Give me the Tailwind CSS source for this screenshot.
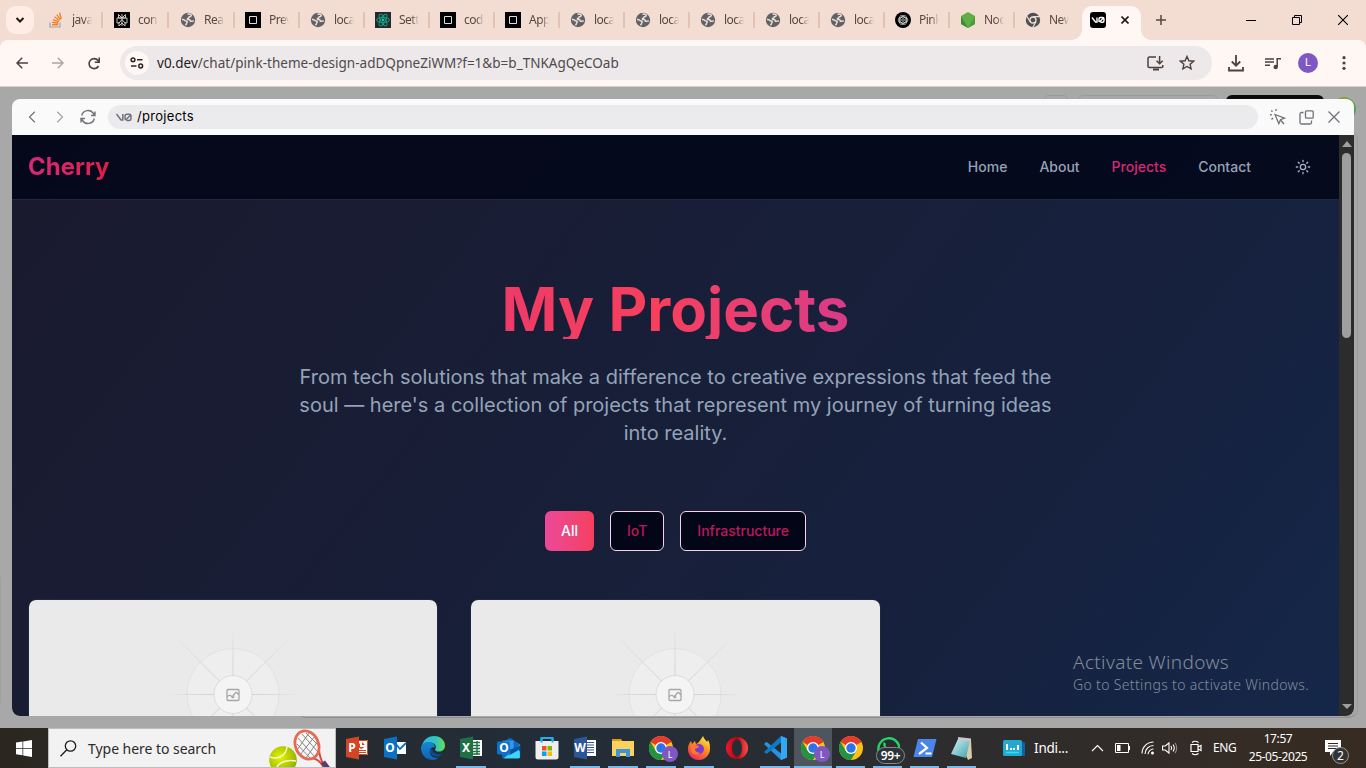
<!DOCTYPE html>
<html lang="en">
<head>
<meta charset="utf-8">
<title>v0 preview - Cherry</title>
<script src="https://cdn.jsdelivr.net/npm/@tailwindcss/browser@4"></script>
</head>
<body class="w-[1366px] h-[768px] overflow-hidden flex flex-col bg-[#a8a8a8] font-['Noto_Sans',sans-serif]">

<svg width="0" height="0" class="absolute">
  <defs>
    <linearGradient id="gEdge" x1="0" y1="0" x2="1" y2="0"><stop offset="0" stop-color="#2bb5e8"/><stop offset=".6" stop-color="#30c5c0"/><stop offset="1" stop-color="#6be04e"/></linearGradient>
    <linearGradient id="gEdge2" x1="0" y1="0" x2="0" y2="1"><stop offset="0" stop-color="#1689d0"/><stop offset="1" stop-color="#1162b6"/></linearGradient>
    <linearGradient id="gFire" x1="0.8" y1="0" x2="0.2" y2="1"><stop offset="0" stop-color="#fff04a"/><stop offset=".45" stop-color="#ff8a1c"/><stop offset="1" stop-color="#f0206a"/></linearGradient>
    <linearGradient id="gNote" x1="0" y1="0" x2="1" y2="1"><stop offset="0" stop-color="#d5f2f5"/><stop offset="1" stop-color="#3d9fae"/></linearGradient>
    <linearGradient id="gOpera" x1="0" y1="0" x2="1" y2="0"><stop offset="0" stop-color="#f0162c"/><stop offset=".5" stop-color="#b3050f"/><stop offset="1" stop-color="#ff4f4f"/></linearGradient>
    <radialGradient id="gBall" cx=".4" cy=".4" r=".7"><stop offset="0" stop-color="#e5f500"/><stop offset="1" stop-color="#8aa800"/></radialGradient>
    <radialGradient id="ray" gradientUnits="userSpaceOnUse" cx="70" cy="70" r="66"><stop offset=".3" stop-color="#d4d4d4"/><stop offset=".7" stop-color="#dcdcdc"/><stop offset="1" stop-color="#eaeaea"/></radialGradient>
    <radialGradient id="rayDiag" gradientUnits="userSpaceOnUse" cx="70" cy="70" r="90"><stop offset=".2" stop-color="#d2d2d2"/><stop offset=".6" stop-color="#dbdbdb"/><stop offset="1" stop-color="#eaeaea"/></radialGradient>
    <symbol id="globe" viewBox="0 0 16 16"><circle cx="8" cy="8" r="7.200" fill="#5f6368"/><path d="M7.500 2.200q3-.6 3.800 1.100-.3 1.400-2 1.500-.2 1.500-1.800 1.600-.3 1.300 1.300 1.200 1.700.2 1.600 1.600 1.300.4 3.600-.3M2 7.500q2.300-.3 3.200 1.200 2 .1 2.200 1.300-.8.600-1 1.700-.3.800-1 1.400" fill="none" stroke="#f3ddd3" stroke-width="1.500"/></symbol>
    <symbol id="square" viewBox="0 0 16 16"><path d="M0 0h16v16H0z"/><path d="M4.500 4.500h7v7h-7z" fill="none" stroke="#ddd"/></symbol>
    <symbol id="so" viewBox="0 0 16 16"><path d="M2 10.500v4.500h10v-4.500" fill="none" stroke="#9aa5ae" stroke-width="1.200"/><path d="M4 12.800h6.200M4.200 10.300l6.100 1M5 7.600l5.700 2.200M6.500 4.800l5 3.900M8.800 2.600l3.600 5M11.500.6l1.800 6.200" stroke="#f48024" stroke-width="1.400"/></symbol>
    <symbol id="pplx" viewBox="0 0 16 16"><path d="M0 0h16v16H0z"/><path d="M8 2v12M4.500 2.500L8 6l3.500-3.500V6h-7zM3 6h10v5h-2L8 7.500 5 11H3zM5 10v4l3-3 3 3v-4" fill="none" stroke="#d8d8d0" stroke-width=".9"/></symbol>
    <symbol id="react" viewBox="0 0 16 16"><path d="M0 0h16v16H0z" fill="#24292f"/><g fill="none" stroke="#14a88a" stroke-width=".9"><ellipse cx="8" cy="8" rx="6.500" ry="2.500"/><ellipse cx="8" cy="8" rx="6.500" ry="2.500" transform="rotate(60 8 8)"/><ellipse cx="8" cy="8" rx="6.500" ry="2.500" transform="rotate(120 8 8)"/></g><circle cx="8" cy="8" r="1.400" fill="#14c8a0"/></symbol>
    <symbol id="gpt" viewBox="0 0 16 16"><circle cx="8" cy="8" r="8"/><g fill="none" stroke="#e8e8e8" stroke-width=".7"><ellipse cx="8" cy="8" rx="4.800" ry="2.900"/><ellipse cx="8" cy="8" rx="4.800" ry="2.900" transform="rotate(60 8 8)"/><ellipse cx="8" cy="8" rx="4.800" ry="2.900" transform="rotate(120 8 8)"/><circle cx="8" cy="8" r="1.300"/></g></symbol>
    <symbol id="node" viewBox="0 0 16 16"><path d="M8 0l7 4v8l-7 4-7-4V4z" fill="#5fb044"/><path d="M1 4l7 12-7-4z" fill="#3d8b37"/><path d="M15 4v8l-7 4z" fill="#4a9c3a"/></symbol>
    <symbol id="chromeg" viewBox="0 0 16 16"><circle cx="8" cy="8" r="7.200" fill="#4d5156"/><circle cx="8" cy="8" r="3" fill="none" stroke="#f3ddd3" stroke-width="1.300"/><path d="M8 4.600h6.800M5 9.700L1.700 4M11 9.700L7.700 15.500" stroke="#f3ddd3" stroke-width="1.200"/></symbol>
    <symbol id="chrome" viewBox="0 0 24 24"><circle cx="12" cy="12" r="12" fill="#fbc116"/><path d="M12 12L1.600 6A12 12 0 0 1 22.400 6z" fill="#e33b2e"/><path d="M12 6h10.400l-1-1.600L12 3z" fill="#e33b2e"/><path d="M1.600 6A12 12 0 0 0 12 24l5.200-9L12 12 6.800 15z" fill="#229342"/><circle cx="12" cy="12" r="6" fill="#fff"/><circle cx="12" cy="12" r="4.700" fill="#2d73e8"/></symbol>
    <symbol id="ppt" viewBox="0 0 24 24"><path d="M12 4h11v15H12z" fill="#fff"/><path d="M12 4.500h10.500v14H12" fill="none" stroke="#d24625"/><path d="M15 7a3 3 0 1 0 4 4h-4zM17 6v3h3zM14 14h7v1h-7zM14 16h7v1h-7z" fill="#d24625"/><path d="M1 3l13-2.500v23L1 21z" fill="#d24625"/></symbol>
    <symbol id="outl" viewBox="0 0 24 24"><path d="M12 6h11v12H12z" fill="#fff"/><path d="M13 8l4 5 6-6" fill="none" stroke="#0a71c5" stroke-width="1.800"/><path d="M1 3l13-2.500v23L1 21z" fill="#0a71c5"/></symbol>
    <symbol id="xls" viewBox="0 0 24 24"><path d="M12 4h11v16H12z" fill="#fff"/><path d="M14 6.500h7M14 9.500h7M14 12.500h7M14 15.500h7M14 18h7M18 5v14" stroke="#1e7145" stroke-width="1.400"/><path d="M1 3l13-2.500v23L1 21z" fill="#1e7145"/></symbol>
    <symbol id="word" viewBox="0 0 24 24"><path d="M12 4h11v16H12z" fill="#fff"/><path d="M14 6.500h7M14 9h7M14 11.500h7M14 14h7M14 16.500h7" stroke="#2b579a" stroke-width="1.200"/><path d="M1 3l13-2.500v23L1 21z" fill="#2b579a"/></symbol>
    <symbol id="edge" viewBox="0 0 24 24"><path d="M1 9C3 3 8 0 13 0c7 0 11 5 11 9.500 0 4-3 6-6 6-3.500 0-4.500-1.500-3.500-3 1.500-2-1-6-5-6C5 6.500 2 9 1 11z" fill="url(#gEdge)"/><path d="M0 12c0-4 4-6.500 8-6 4 .4 6 3 5.800 5.500-2-1-5 0-5 4 0 4 4 7.500 9 6-2 1.700-4 2.500-6 2.500C5 24 0 18.500 0 12z" fill="url(#gEdge2)"/><path d="M9 13c-1 5 4 9 10 7l3.500-2.500C18 19.500 12 18 11 13z" fill="#0d4a9a"/></symbol>
    <symbol id="newoutl" viewBox="0 0 26 24"><path d="M3 8l11-7 11 7v13a2 2 0 0 1-2 2H6z" fill="#1268c0"/><path d="M6 4h12v9H6z" fill="#2e9be8"/><path d="M25 8v14a1 1 0 0 1-1 1H7L25 8z" fill="#2ec2f5"/><path d="M15 14l10-5v6L13 23z" fill="#0b4f9e"/><path d="M8 23l16-9v8l-1 1z" fill="#3fd5fb"/><rect x="0" y="5" width="14" height="14" rx="1.500" fill="#1070c8"/></symbol>
    <symbol id="store" viewBox="0 0 24 24"><path d="M6.500 7V2h11v5" fill="none" stroke="#22aee8" stroke-width="2"/><path d="M.5 5h23v16a2.500 2.500 0 0 1-2.500 2.500H3A2.500 2.500 0 0 1 .5 21z" fill="#eee"/><path d="M6.500 6.500V2M17.500 6.500V2" stroke="#22aee8" stroke-width="2"/><path d="M7 10h4.500v4.500H7z" fill="#f25022"/><path d="M12.500 10H17v4.500h-4.500z" fill="#7fba00"/><path d="M7 15.500h4.500V20H7z" fill="#00a4ef"/><path d="M12.500 15.500H17V20h-4.500z" fill="#ffb900"/></symbol>
    <symbol id="folder" viewBox="0 0 24 24"><path d="M1 3h9l2 3H1z" fill="#e09a10"/><path d="M1 5h22v15H1z" fill="#fbd25d"/><path d="M5 21v-8h14v8h-4v-4h-6v4z" fill="#3c95d8"/></symbol>
    <symbol id="ff" viewBox="0 0 24 24"><path d="M12 24C5 24 1 19 1 13c0-3 1-6 3-8l1 3 3-3 1 3c3-1 5-5 7-8 1 3 3 4 4 6l1-2c2 3 2 6 2 9 0 6-5 11-11 11z" fill="url(#gFire)"/><circle cx="12" cy="13" r="5" fill="#7a3cd0"/><path d="M4 10c3-2 5 0 8 0 0 2-3 2-4 3 0 3 3 4 5 3-3 5-9 2-9-2z" fill="#ff7a24"/></symbol>
    <symbol id="opera" viewBox="0 0 24 24"><path fill-rule="evenodd" d="M12 1a11 11 0 1 0 0 22 11 11 0 0 0 0-22zm0 2.500c3 0 5 4 5 8.500s-2 8.500-5 8.500-5-4-5-8.500 2-8.500 5-8.500z" fill="url(#gOpera)"/></symbol>
    <symbol id="code" viewBox="0 0 24 24"><path d="M18 0l6 2.500v19L18 24 1 8l2.500-2.200L18 17.500z" fill="#2196e3"/><path d="M18 0v6.500L3.500 18 1 16z" fill="#0d7ac8"/><path d="M18 0l6 2.500v19L18 24z" fill="#32a8f2"/></symbol>
    <symbol id="wa" viewBox="0 0 24 24"><path d="M2 23l1.500-5.500A10.500 10.500 0 1 1 7 21.500z" fill="none" stroke="#25d366" stroke-width="2.400"/><path d="M8 6c-2 2 0 6 3 8s6 2 6 0l-3-2-1.500 1C11 12 10 11 9.500 9.500L10 8z" fill="#25d366"/></symbol>
    <symbol id="ps" viewBox="0 0 24 24"><path d="M5 3h18.500L19 21H.5z" fill="#4a86ea"/><path d="M8 6.500l6 5.500-8 6M12.500 17.500h6" fill="none" stroke="#fff" stroke-width="2.200"/></symbol>
    <symbol id="notepad" viewBox="0 0 24 24"><path d="M8 2l13 2 1 18-4 2z" fill="#d8cba8"/><path d="M8 3l12 1-4 18L1 18z" fill="url(#gNote)"/><path d="M8 1l13 1.500v3L8 4z" fill="#c8c8c8"/></symbol>
  </defs>
</svg>

<!-- Browser tab strip -->
<div class="h-10 shrink-0 bg-[#f3ddd3] flex">
  <div class="w-[48px] pl-[6px] pt-[6px]"><div class="size-7 rounded-[10px] bg-[#ffede5] grid place-items-center"><svg width="10" height="8" viewBox="0 0 10 8"><path d="M1.500 2L5 5.500 8.500 2" fill="none" stroke="#1f1a18" stroke-width="2"/></svg></div></div>
  <div id="tabs" class="flex"></div>
  <div class="relative w-[59px] mt-[6px] -ml-[8px] h-[34px] bg-[#fff7f3] rounded-t-[10px] flex items-center pl-2 pb-[6px]">
    <div class="absolute -left-[10px] bottom-0 size-[10px] bg-[radial-gradient(circle_at_0_0,#f3ddd3_9.500px,#fff7f3_10px)]"></div>
    <div class="absolute -right-[10px] bottom-0 size-[10px] bg-[radial-gradient(circle_at_100%_0,#f3ddd3_9.500px,#fff7f3_10px)]"></div>
    <svg width="16" height="16" viewBox="0 0 16 16"><rect width="16" height="16" rx="3"/><path d="M2 5.500l3.500 4.500h1.500V5.500M9 10V7q0-1.500 1.500-1.500h2Q14 5.500 14 7v1.800q0 1.500-1.500 1.500h-2M9.500 10l4-4" fill="none" stroke="#fff" stroke-width="1.400"/></svg>
    <svg class="ml-[15px]" width="8" height="8" viewBox="0 0 8 8"><path d="M.5.500l7 7m0-7l-7 7" stroke="#1f1a18" stroke-width="1.600"/></svg>
  </div>
  <svg class="ml-[15px] mt-[15px]" width="10" height="10" viewBox="0 0 10 10"><path d="M5 0v10M0 5h10" stroke="#584740" stroke-width="1.500"/></svg>
  <div class="ml-auto flex pt-[15px] pr-[18px] gap-[36px] text-black">
    <svg width="10" height="10"><path d="M0 5.500h10" stroke="#000"/></svg>
    <svg width="10" height="10" viewBox="0 0 10 10" fill="none" stroke="#000"><path d="M.5 2.500h7v7h-7zM2.500 2V.500h7v7H8"/></svg>
    <svg width="10" height="10" viewBox="0 0 10 10"><path d="M0 0l10 10M10 0L0 10" stroke="#000" stroke-width="1.100"/></svg>
  </div>
</div>

<!-- Address bar -->
<div class="bg-[#f3ddd3] shrink-0"><div class="h-[46px] bg-[#fff7f3] rounded-t-[8px] flex items-center pl-4">
  <svg width="12" height="12" viewBox="0 0 12 12" fill="none" stroke="#4f403a" stroke-width="1.500"><path d="M12 6H1M6.200.8L1 6l5.200 5.200"/></svg>
  <svg class="ml-6" width="12" height="12" viewBox="0 0 12 12" fill="none" stroke="#b0a5a0" stroke-width="1.500"><path d="M0 6h11M5.800.8L11 6l-5.200 5.200"/></svg>
  <svg class="ml-6" width="12" height="13" viewBox="0 0 12 13" fill="none" stroke="#4f403a" stroke-width="1.600"><path d="M10.500 9A5 5 0 1 1 10 3.500L11.200 5M11.200.5v4.700H6.800"/></svg>
  <div class="ml-5 w-[1092px] h-[34px] rounded-full bg-[#ede8ea] flex items-center pl-[5px] pr-[17px]">
    <div class="size-6 rounded-full bg-[#fff7f3] grid place-items-center"><svg width="14" height="12" viewBox="0 0 14 12" fill="none" stroke="#2b2422" stroke-width="1.500"><circle cx="3" cy="2.800" r="1.900"/><path d="M7 2.800h5.500M1 9h5.500"/><circle cx="10.700" cy="9" r="1.900"/></svg></div>
    <div class="ml-2 text-[13.500px] whitespace-nowrap text-[#4f4a4c] tracking-[0.02px]"><span class="text-[#1f1a1c]">v0.dev</span>/chat/pink-theme-design-adDQpneZiWM?f=1&amp;b=b_TNKAgQeCOab</div>
    <svg class="ml-auto" width="17" height="15" viewBox="0 0 17 15" fill="none" stroke="#4f403a" stroke-width="1.500"><path d="M9 1H2.500Q1 1 1 2.500v8Q1 11.500 2.500 11.500h12.300q1 0 1-1V9M12.600 0v7.500M9.500 4.700l3.100 3.100 3.100-3.100"/><path d="M6 13.500h6" stroke-width="2"/></svg>
    <svg class="ml-[15px]" width="16" height="16" viewBox="0 0 16 16"><path d="M8 1.500l1.900 4.300 4.700.4-3.500 3.100 1 4.600L8 11.500l-4.100 2.400 1-4.600L1.400 6.200l4.700-.4z" fill="none" stroke="#4f403a" stroke-width="1.400"/></svg>
  </div>
  <svg class="ml-4" width="16" height="17" viewBox="0 0 16 17" fill="none" stroke="#4f403a" stroke-width="1.800"><path d="M8 0v10.500M3.800 6.500L8 10.700l4.200-4.200M1 12v3.500h14V12"/></svg>
  <svg class="ml-[21px]" width="16" height="13" viewBox="0 0 16 13" fill="none" stroke="#4f403a" stroke-width="1.500"><path d="M0 2h9M0 5h9M0 8.300h5M12.200 10V1.800H16"/><circle cx="10.700" cy="10" r="2.200" fill="#4f403a" stroke="none"/></svg>
  <div class="ml-[17px] size-5 rounded-full bg-[#7e57c2] text-white text-[11px] grid place-items-center font-['Roboto',sans-serif]">L</div>
  <svg class="ml-[24px]" width="4" height="14" viewBox="0 0 4 14" fill="#4f403a"><circle cx="2" cy="1.700" r="1.600"/><circle cx="2" cy="7" r="1.600"/><circle cx="2" cy="12.300" r="1.600"/></svg>
</div></div>
<div class="h-px shrink-0 bg-[#d5cfcc]"></div>

<!-- Dimmed page with preview window -->
<main class="relative h-[641px] shrink-0 px-3 pt-3">
  <div class="absolute left-[1043px] top-2 w-[26px] h-8 rounded-md border border-[#9b9b9b]"></div>
  <div class="absolute left-[1077px] top-2 w-[142px] h-8 rounded-md border border-[#9b9b9b]"></div>
  <div class="absolute left-[1226px] top-2 w-[98px] h-8 rounded-md bg-[#0c0c0c]"></div>
  <div class="absolute left-[1332px] top-[10px] size-6 rounded-full bg-linear-to-br from-[#a0a020] to-[#18a068]"></div>
  <div class="absolute left-[1340px] top-[46px] w-[18px] h-[584px] rounded-md border border-[#9b9b9b]"></div>
  <div class="absolute left-0 top-[490px] w-px h-[126px] bg-[#a0a0a0]"></div>
  <div class="absolute left-[298px] top-[610px] w-[1058px] h-[21px] rounded-[8px] border-b border-[#8e8e8e]"></div>

  <section class="relative w-[1342px] h-[617px] rounded-[8px] overflow-hidden bg-[#fafafa] flex flex-col">
    <div class="h-9 shrink-0 flex items-center pl-4 text-[#71717a]">
      <svg width="8" height="12" viewBox="0 0 8 12" fill="none" stroke="#71717a" stroke-width="1.200"><path d="M6.800.8L1.500 6l5.300 5.200"/></svg>
      <svg class="ml-5" width="8" height="12" viewBox="0 0 8 12" fill="none" stroke="#a1a1aa" stroke-width="1.200"><path d="M1.200.8L6.500 6l-5.300 5.200"/></svg>
      <svg class="ml-4" width="16" height="16" viewBox="0 0 16 16" fill="none" stroke="#71717a" stroke-width="1.400"><path d="M1.700 6.500A6.500 6.500 0 0 1 13.500 4.500L15 6.500M15 2.500v4h-4M14.300 9.500A6.500 6.500 0 0 1 2.500 11.500L1 9.500M1 13.500v-4h4"/></svg>
      <div class="ml-3 w-[1150px] h-6 rounded-full bg-[#ebebed] flex items-center pl-2">
        <svg width="16" height="9" viewBox="0 0 16 9" fill="none" stroke="#71717a" stroke-width="1.500"><path d="M.5 1l4.500 6h1.800V1M9 6.500V3q0-1.800 1.800-1.800h2.400Q15 1.200 15 3v2.600q0 1.800-1.800 1.800h-2.600M9.500 7.200l5-5.200"/></svg>
        <span class="ml-[5px] font-['Inter',sans-serif] text-[13px] tracking-[0.3px] text-black">/projects</span>
      </div>
      <svg class="ml-[11px]" width="17" height="16" viewBox="0 0 17 16" fill="none" stroke="#71717a" stroke-width="1.300"><path d="M6 5.500l9.500 3.700-4 1.500-1.700 4z" /><path d="M11.500 11l3.500 4M1 5.800h1.800M2.300 1.500l1.200 1.200M7 0v2M4 9l-1.500 1.500" stroke-width="1.400"/></svg>
      <svg class="ml-[13px]" width="15" height="15" viewBox="0 0 15 15" fill="none" stroke="#71717a" stroke-width="1.300"><path d="M4.500 2.500h-2Q1 2.500 1 4v8.500Q1 14 2.500 14H11q1.500 0 1.500-1.500v-2"/><rect x="6.500" y=".8" width="7.700" height="7.400" rx="1"/></svg>
      <svg class="ml-[14px]" width="12" height="12" viewBox="0 0 12 12"><path d="M.5.500l11 11m0-11l-11 11" stroke="#71717a" stroke-width="1.300"/></svg>
    </div>
    <div class="flex h-[581px] font-['Inter',sans-serif]">
      <div class="w-[1327px] h-full overflow-hidden">
        <div class="h-[1715px] bg-linear-to-br from-[#1a1a2e] via-[#16213e] to-[#0f3460]">
          <header class="h-[65px] bg-[#020617]/85 border-b border-[#1e293b] flex items-center px-4">
            <div class="text-2xl font-bold bg-linear-to-r from-[#db2777] to-[#e11d48] bg-clip-text text-transparent">Cherry</div>
            <nav class="ml-auto flex items-center gap-8 text-sm font-medium text-[#94a3b8]">
              <span>Home</span><span>About</span><span class="text-[#db2777]">Projects</span><span>Contact</span>
              <svg class="ml-3 mr-3" width="16" height="16" viewBox="0 0 24 24" fill="none" stroke="#a8b4c6" stroke-width="2" stroke-linecap="round"><circle cx="12" cy="12" r="4"/><path d="M12 2v2M12 20v2M4.930 4.930l1.410 1.410M17.660 17.660l1.410 1.410M2 12h2M20 12h2M6.340 17.660l-1.410 1.410M19.070 4.930l-1.410 1.410"/></svg>
            </nav>
          </header>
          <div class="pt-[79px] px-4">
            <h1 class="w-[350px] mx-auto text-center whitespace-nowrap text-[60px] leading-[60px] font-bold bg-linear-to-r from-[#ee3a67] via-[#f83f5c] via-[45%] to-[#d83b88] bg-clip-text text-transparent">My Projects</h1>
            <p class="mt-6 w-[768px] mx-auto text-center text-xl leading-7 text-[#94a3b8]">From tech solutions that make a difference to creative expressions that feed the soul — here's a collection of projects that represent my journey of turning ideas into reality.</p>
            <div class="mt-16 flex justify-center gap-4 text-sm font-medium">
              <div class="h-10 px-4 rounded-md flex items-center text-white bg-linear-to-r from-[#ec4899] to-[#f43f5e]">All</div>
              <div class="h-10 px-4 rounded-md flex items-center text-[#be185d] bg-[#020617] border border-[#fbcfe8]">IoT</div>
              <div class="h-10 px-4 rounded-md flex items-center text-[#be185d] bg-[#020617] border border-[#fbcfe8]">Infrastructure</div>
            </div>
            <div id="cards" class="mt-12 grid grid-cols-3 gap-8"></div>
          </div>
        </div>
      </div>
      <div class="w-[15px] bg-[#2c2c2c] flex flex-col items-center py-[6px]">
        <svg width="10" height="6"><path d="M0 6l5-6 5 6z" fill="#9f9f9f"/></svg>
        <div class="mt-[6px] w-[9px] h-[185px] rounded-full bg-[#9f9f9f]"></div>
        <svg class="mt-auto" width="10" height="6"><path d="M0 0l5 5 5-5z" fill="#9f9f9f"/></svg>
      </div>
    </div>
  </section>

  <div class="absolute left-[1073px] top-[562px] text-[#828c9c] whitespace-nowrap font-light">
    <div class="text-[19px] leading-[26px] tracking-[0.35px]">Activate Windows</div>
    <div class="text-[14px] leading-5 tracking-[0.35px]">Go to Settings to activate Windows.</div>
  </div>
</main>

<!-- Taskbar -->
<footer class="h-10 shrink-0 flex bg-linear-to-r from-[#2b261f] via-[#222d39] via-[40%] to-[#372b21] text-white">
  <div class="w-12 grid place-items-center"><svg width="16" height="17" viewBox="0 0 16 17" fill="#fff"><path d="M0 2.500L6.500 1.500V8H0zM7.200 1.400L16 0v8H7.200zM0 8.800h6.500v6.500L0 14.300zM7.200 8.800H16V17l-8.800-1.400z"/></svg></div>
  <div class="w-[288px] bg-[#f2f2f2] border border-[#bdbdbd] flex items-center pl-[11px] overflow-hidden">
    <svg width="17" height="17" viewBox="0 0 17 17" fill="none" stroke="#1b1b1b" stroke-width="1.300"><circle cx="10.500" cy="6" r="5.200"/><path d="M6.800 9.800L.5 16.300"/></svg>
    <span class="ml-[11px] text-[14px] text-[#2b2b2b] whitespace-nowrap tracking-[-0.04px]">Type here to search</span>
    <svg class="ml-auto mr-1 self-start" width="62" height="38" viewBox="0 0 62 38"><circle cx="14" cy="31" r="13.800" fill="url(#gBall)"/><path d="M1 28c9 3 16-2 17-10M7 42c0-8 10-12 20-10" fill="none" stroke="#f4f8d8" stroke-width="1.500"/><path d="M41 29q9 0 14 10M50 21q1 10 6 16" fill="none" stroke="#dd4640" stroke-width="2"/><ellipse cx="38" cy="16" rx="11" ry="14" transform="rotate(-24 38 16)" fill="#f8f8f8"/><path d="M29 9l16 18M33 5l15 17M28 15l13 14M37 4l12 12M28 21L40 4M31 26L46 7M37 29L49 12" stroke="#7a7a7a" stroke-width=".9"/><ellipse cx="38" cy="16" rx="11.500" ry="14.500" transform="rotate(-24 38 16)" fill="none" stroke="#e66a52" stroke-width="2.800"/><path d="M54 33l6 8" stroke="#5a3a72" stroke-width="5"/></svg>
  </div>
  <div id="apps" class="ml-[2px] flex"></div>
  <div class="ml-[23px] flex items-center">
    <svg width="22" height="16" viewBox="0 0 22 16"><rect x="14" y="2" width="8" height="14" rx="1" fill="#0b62a8"/><rect width="19" height="16" rx="1.500" fill="#25a8d0"/><path d="M4 4v6M8 8v2M11 8v2M15 5v5" stroke="#fff" stroke-width="2"/><path d="M3 12.500h13" stroke="#34e0f0" stroke-width="1.500"/></svg>
    <span class="ml-[9px] w-[48px] text-[13.500px] tracking-[-0.2px]">Indi...</span>
    <svg class="ml-[9px]" width="13" height="8" viewBox="0 0 13 8"><path d="M1 7l5.500-5.500L12 7" fill="none" stroke="#fff" stroke-width="1.200"/></svg>
    <svg class="ml-[11px]" width="15" height="10" viewBox="0 0 15 10"><path d="M.5.500h13v9H.5z" fill="none" stroke="#fff"/><path d="M2 2h3.500v6H2zM14 3h1v4h-1z" fill="#fff"/></svg>
    <svg class="ml-[11px]" width="14" height="14" viewBox="0 0 14 14" fill="none" stroke="#fff" stroke-width="1.100"><path d="M1 12.500A11.500 11.500 0 0 1 12.500 1M4 13a8.500 8.500 0 0 1 8.500-8.500M7 13.300A5.500 5.500 0 0 1 12.500 8"/><circle cx="11.500" cy="12" r="1.500" fill="#fff" stroke="none"/></svg>
    <svg class="ml-[7px]" width="17" height="14" viewBox="0 0 17 14" fill="none" stroke="#fff" stroke-width="1.100"><path d="M.6 5v4h2.600L7 12V2L3.200 5zM9 5q1.300 2 0 4M11 3.500q2.500 3.500 0 7"/><path d="M13 1.800q3.500 5.200 0 10.400" stroke="#888"/></svg>
    <svg class="ml-[11px]" width="12" height="16" viewBox="0 0 12 16" fill="none" stroke="#fff" stroke-width="1.200"><path d="M1 4.500h7v7H1zM8 7l3-1.500v5L8 9M2 2.500q3-2.500 6.500 0M2 13.500q3 2.500 6.500 0"/></svg>
    <span class="ml-[11px] w-[24px] text-[12px] tracking-[-0.4px]">ENG</span>
    <div class="ml-[11px] w-[60px] text-center text-[12px] leading-[18px] tracking-[-0.4px] whitespace-nowrap flex flex-col items-center"><span>17:57</span><span>25-05-2025</span></div>
    <div class="relative ml-[17px] w-[24px] h-[26px]"><svg width="17" height="17" viewBox="0 0 17 17" class="mt-[5px]"><path d="M0 0h16v12H8l-3 4v-4H0z" fill="#fff"/><path d="M3 3.500h10M3 6h10M3 8.500h10" stroke="#33291f"/></svg>
      <div class="absolute left-[7px] top-[12px] size-[17px] rounded-full bg-[#333] border border-[#999] text-[12px] leading-none grid place-items-center">2</div></div>
  </div>
</footer>

<script>
const tabs=[["so","javaS"],["pplx","cont"],["globe","Reac"],["square","Prev"],["globe","local"],["react","Settin"],["square","code"],["square","App"],["globe","local"],["globe","local"],["globe","local"],["globe","local"],["globe","local"],["gpt","Pink"],["node","Nod"],["chromeg","New"]];
document.getElementById("tabs").innerHTML=tabs.map(([i,t],k)=>`<div class="h-10 flex items-center ${k<2?'w-[66px]':'w-[65px]'}"><svg width="16" height="16"><use href="#${i}"/></svg><div class="ml-2 w-[20px] overflow-hidden whitespace-nowrap text-[12px] tracking-[-0.5px] text-[#5a4740] [mask-image:linear-gradient(to_right,black_60%,transparent)]">${t}</div>${k<15?'<div class="ml-[9px] w-[2px] h-4 bg-[#e3c1b3]"></div>':''}</div>`).join("");
const apps=[["ppt","P",0],["outl","O",0],["edge","",0],["xls","X",1],["newoutl","O",0],["store","",0],["word","W",1],["folder","",1],["chrome","L",1],["ff","",1],["opera","",0],["code","",1],["chrome","L",2],["chrome","",1],["wa","99+",1],["ps","",1],["notepad","",1]];
document.getElementById("apps").innerHTML=apps.map(([i,t,u],k)=>{
  const label=t==="L"?'<div class="absolute right-[2px] top-[18px] size-4 rounded-full bg-[#7e57c2] text-[9px] leading-none grid place-items-center">L</div>'
   :t==="99+"?'<div class="absolute left-[7px] top-[19px] h-[17px] w-[29px] rounded-full bg-[#2c3339] border border-[#888] text-[12px] font-semibold leading-none grid place-items-center tracking-[-0.3px]">99+</div>'
   :t?'<div class="absolute left-[7px] top-[10px] w-[14px] text-center text-[12px] font-bold leading-5">'+t+'</div>':'';
  return `<div class="relative h-10 grid place-items-center ${k<13?'w-[38px]':'w-[37px]'} ${u===2?'bg-[#4d565f]':''}"><svg width="24" height="24"><use href="#${i}"/></svg>${label}${u?'<div class="absolute bottom-0 h-[2px] bg-[#76b9ed] '+(u===2?'inset-x-0':'inset-x-[4px]')+'"></div>':''}</div>`}).join("");
document.getElementById("cards").innerHTML=[0,1].map(()=>`<div class="h-[420px] rounded-lg border border-[#1e293b] bg-[#020617] overflow-hidden"><div class="h-[192px] bg-[#eaeaea] flex justify-center"><svg width="140" height="192" viewBox="0 -24.500 140 192"><circle cx="70" cy="70" r="46" fill="#eeeeee" stroke="#e2e2e2"/><g stroke="url(#ray)"><path d="M70 5V135M5 70H135"/></g><path d="M8 8L132 132M132 8L8 132" stroke="url(#rayDiag)"/><circle cx="70" cy="70" r="19" fill="#f4f4f4" stroke="#dcdcdc"/><g fill="none" stroke="#a6a6a6" stroke-width="1.300"><rect x="64" y="65" width="12" height="11" rx="1"/><path d="M64 72l2-1q1.500-.5 2.500.8l1 1.200q1.500.3 1.500-1M69.500 72l2.700-3.500q1-1 2 0L76 70.500"/></g></svg></div></div>`).join("");
</script>
</body>
</html>
